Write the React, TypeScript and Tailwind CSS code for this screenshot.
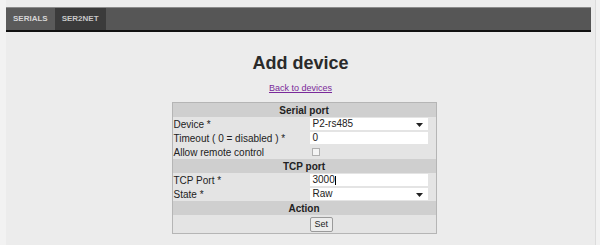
import React from "react";

const Arrow = () => (
  <svg width="7" height="4" viewBox="0 0 7 4" className="absolute right-[5px] top-[5px]">
    <path d="M0 0 L7 0 L3.5 4 Z" fill="#222" />
  </svg>
);

const Header = ({ title }: { title: string }) => (
  <tr>
    <td colSpan={2} className="bg-[#cfcfcf] text-center font-bold h-[14px] leading-[13px] px-[2px]">
      {title}
    </td>
  </tr>
);

const Row = ({ label, children }: { label: string; children: React.ReactNode }) => (
  <tr className="bg-[#e4e4e4]">
    <td className="h-[14px] leading-[13px] px-[1px] w-[136px]">{label}</td>
    <td className="h-[14px] px-[1px] py-0">{children}</td>
  </tr>
);

export default function App() {
  return (
    <div
      className="w-[600px] h-[245px] bg-[#f2f2f2] overflow-hidden text-[#222]"
      style={{ fontFamily: '"Liberation Sans", Arial, sans-serif' }}
    >
      <div className="ml-[6px] w-[590px] h-full bg-[#ececec] border-r border-[#dcdcdc] pt-[7px]">
        <nav className="flex h-[25px] w-[585px] bg-[#565656] border-t border-[#8a8a8a] border-b-2 border-b-[#111]">
          <a className="flex items-center px-[7px] text-[8px] font-bold text-[#d6d6d6] bg-[#5a5a5a]">
            SERIALS
          </a>
          <a className="flex items-center px-[7px] text-[8px] font-bold text-[#c8c8c8] bg-[#3b3b3b]">
            SER2NET
          </a>
        </nav>

        <h1 className="text-center text-[18px] font-bold mt-[20px] leading-[22px] text-[#2a2a2a]">Add device</h1>
        <div className="text-center mt-[6px] leading-[12px]">
          <a className="text-[9px] text-[#7a2a9a] underline">Back to devices</a>
        </div>

        <div className="flex justify-center mt-[8px] pl-[7px]">
          <table className="w-[265px] border border-[#b5b5b5] bg-[#e4e4e4] text-[10px] border-separate border-spacing-0">
            <tbody>
              <Header title="Serial port" />
              <Row label="Device *">
                <div className="relative w-[118px] h-[12px] bg-white leading-[12px] pl-[3px]">
                  P2-rs485
                  <Arrow />
                </div>
              </Row>
              <Row label="Timeout ( 0 = disabled ) *">
                <div className="w-[118px] h-[12px] bg-white leading-[12px] pl-[3px]">0</div>
              </Row>
              <Row label="Allow remote control">
                <div className="ml-[2px] w-[8px] h-[8px] border border-[#b0b0b0] bg-[#f4f4f4]" />
              </Row>
              <Header title="TCP port" />
              <Row label="TCP Port *">
                <div className="w-[118px] h-[12px] bg-white leading-[12px] pl-[3px]">
                  3000<span className="inline-block w-px h-[9px] bg-black align-middle" />
                </div>
              </Row>
              <Row label="State *">
                <div className="relative w-[118px] h-[12px] bg-white leading-[12px] pl-[3px]">
                  Raw
                  <Arrow />
                </div>
              </Row>
              <Header title="Action" />
              <tr className="bg-[#e4e4e4]">
                <td className="h-[18px]" />
                <td className="h-[18px] py-[1px] px-[1px]">
                  <button className="h-[15px] px-[4px] text-[9px] leading-[12px] border border-[#9a9a9a] rounded-[2px] bg-[#ececec]">
                    Set
                  </button>
                </td>
              </tr>
            </tbody>
          </table>
        </div>
      </div>
    </div>
  );
}
